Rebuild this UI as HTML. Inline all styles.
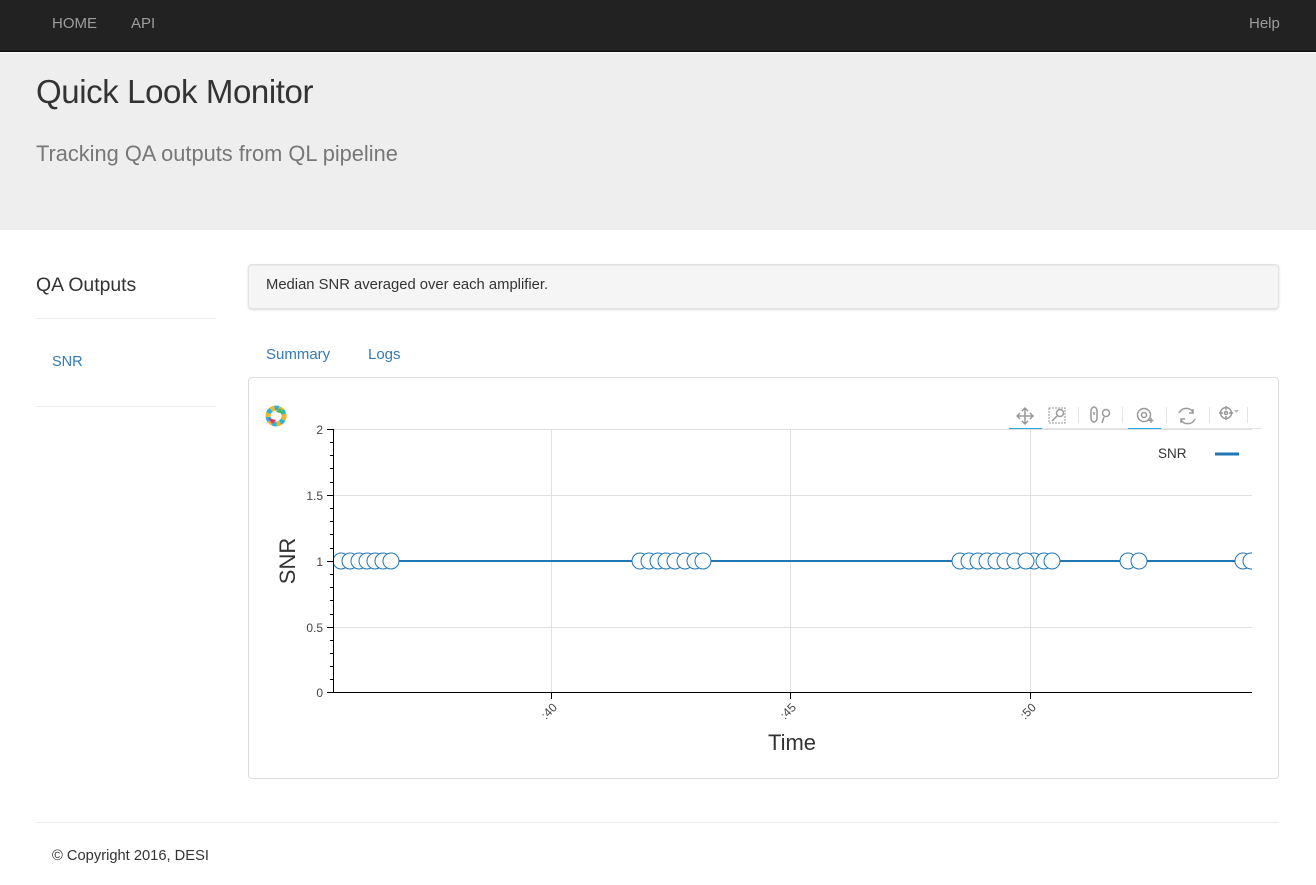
<!DOCTYPE html>
<html><head><meta charset="utf-8"><style>
*{margin:0;padding:0;box-sizing:border-box}
body{width:1316px;height:885px;position:relative;background:#fff;font-family:"Liberation Sans",sans-serif;overflow:hidden;color:#333}
.a{position:absolute;line-height:1;white-space:nowrap}
</style></head><body>
<div class="a" style="left:0;top:0;width:1316px;height:52px;background:#222;border-bottom:1px solid #080808"></div>
<div class="a" style="left:52px;top:16px;font-size:15px;color:#9d9d9d">HOME</div>
<div class="a" style="left:131px;top:16px;font-size:15px;color:#9d9d9d">API</div>
<div class="a" style="left:1249px;top:16px;font-size:15px;color:#9d9d9d">Help</div>
<div class="a" style="left:0;top:53px;width:1316px;height:177px;background:#eee"></div>
<div class="a" style="left:36px;top:75px;font-size:33px;letter-spacing:-0.4px;color:#333">Quick Look Monitor</div>
<div class="a" style="left:36px;top:143px;font-size:21.8px;color:#777">Tracking QA outputs from QL pipeline</div>
<div class="a" style="left:36px;top:276px;font-size:19.4px;color:#333">QA Outputs</div>
<div class="a" style="left:36px;top:318px;width:180px;height:1px;background:#eee"></div>
<div class="a" style="left:52px;top:355px;font-size:14.5px;color:#337ab7">SNR</div>
<div class="a" style="left:36px;top:406px;width:180px;height:1px;background:#eee"></div>
<div class="a" style="left:248px;top:264px;width:1031px;height:45px;background:#f5f5f5;border:1px solid #e3e3e3;border-radius:4px;box-shadow:inset 0 1px 1px rgba(0,0,0,.05),0 1px 2px rgba(0,0,0,.15)"></div>
<div class="a" style="left:266px;top:278px;font-size:14.8px;color:#333">Median SNR averaged over each amplifier.</div>
<div class="a" style="left:266px;top:347px;font-size:15px;color:#337ab7">Summary</div>
<div class="a" style="left:368px;top:347px;font-size:15px;color:#337ab7">Logs</div>
<div class="a" style="left:248px;top:377px;width:1031px;height:402px;border:1px solid #ddd;border-radius:4px"></div>
<svg class="a" style="left:0;top:0" width="1316" height="885" font-family="Liberation Sans, sans-serif">
<g transform="translate(276,416)">
<circle r="8" fill="none" stroke="#f6b51e" stroke-width="5" stroke-dasharray="4 4"/>
<circle r="8" fill="none" stroke="#1fb5e8" stroke-width="5" stroke-dasharray="4 4" stroke-dashoffset="4"/>
<circle r="5" fill="#fff"/>
<path d="M-8,2 L-4,8 L0,4Z" fill="#e8325c"/><path d="M8,-2 L4,-8 L0,-4Z" fill="#4cb848"/>
</g>
<line x1="1008" y1="428.5" x2="1262" y2="428.5" stroke="#e5e5e5" stroke-width="1"/>
<line x1="1009" y1="429" x2="1042" y2="429" stroke="#26aae1" stroke-width="2"/>
<line x1="1128" y1="429" x2="1161" y2="429" stroke="#26aae1" stroke-width="2"/>
<g stroke="#999" fill="none" stroke-width="1.5">
<path d="M1025,408v16M1017,416h16M1022,411l3-3 3,3M1022,421l3,3 3-3M1020,413l-3,3 3,3M1030,413l3,3-3,3"/>
<rect x="1049" y="408" width="16" height="15" stroke-dasharray="2 1" stroke-width="1"/>
<circle cx="1060" cy="413" r="3.5"/><path d="M1057,416l-5,5"/>
<path d="M1091,411a3,4 0 0 1 6,0v7a3,4 0 0 1-6,0z M1094,412v3"/>
<circle cx="1106" cy="413" r="3.5"/><path d="M1104,417l-2,6"/>
<circle cx="1144" cy="415" r="6.5"/><circle cx="1144" cy="415" r="2.5"/>
<path d="M1151,418v5M1148.5,420.5h5"/>
<path d="M1179,413a8,8 0 0 1 14,-1M1195,419a8,8 0 0 1-14,1"/>
<path d="M1193,409v4h-4M1181,423v-4h4"/>
<circle cx="1226" cy="413" r="5.5"/><circle cx="1226" cy="413" r="1.5"/>
<path d="M1226,406v4M1226,416v4M1219,413h4M1229,413h4"/>
</g>
<path d="M1234,410h5l-2.5,3z" fill="#bbb"/>
<g stroke="#e5e5e5" stroke-width="1"><path d="M1078.5,407v16M1122.5,407v16M1166.5,407v16M1209.5,407v16M1247.5,407v16"/></g>
<g stroke="#e0e0e0" stroke-width="1">
<path d="M333,495.5H1252M333,561.5H1252M333,627.5H1252M333,429.5H1252"/>
<path d="M551.5,429V692M790.5,429V692M1030.5,429V692"/>
</g>
<g stroke="#000" stroke-width="1">
<path d="M333.5,429V693M333,692.5H1252"/>
<path d="M327,429.5h6M327,495.5h6M327,561.5h6M327,627.5h6M327,692.5h6"/>
<path d="M330,442.5h3M330,455.5h3M330,468.5h3M330,482.5h3M330,508.5h3M330,521.5h3M330,534.5h3M330,548.5h3M330,574.5h3M330,587.5h3M330,600.5h3M330,614.5h3M330,640.5h3M330,653.5h3M330,666.5h3M330,679.5h3"/>
<path d="M551.5,692v7M790.5,692v7M1030.5,692v7"/>
</g>
<g font-size="12" fill="#444" text-anchor="end">
<text x="323" y="434">2</text><text x="323" y="500">1.5</text><text x="323" y="566">1</text><text x="323" y="632">0.5</text><text x="323" y="697">0</text>
</g>
<g font-size="12" fill="#444">
<text transform="translate(546,720) rotate(-45)">:40</text>
<text transform="translate(785,720) rotate(-45)">:45</text>
<text transform="translate(1025,720) rotate(-45)">:50</text>
</g>
<text x="792" y="750" font-size="22" fill="#333" text-anchor="middle">Time</text>
<text transform="translate(295,561) rotate(-90)" font-size="22" fill="#333" text-anchor="middle">SNR</text>
<text x="1158" y="458" font-size="13.5" fill="#333">SNR</text>
<line x1="1215" y1="454" x2="1239" y2="454" stroke="#1f77b4" stroke-width="3"/>
<defs><clipPath id="c"><rect x="334" y="429" width="918" height="263"/></clipPath></defs>
<g clip-path="url(#c)">
<line x1="333" y1="561" x2="1252" y2="561" stroke="#1f77b4" stroke-width="2"/>
<g fill="#fff" stroke="#1f77b4" stroke-width="1">
<circle cx="341" cy="561" r="8"/><circle cx="350" cy="561" r="8"/><circle cx="359" cy="561" r="8"/><circle cx="367" cy="561" r="8"/><circle cx="375" cy="561" r="8"/><circle cx="383" cy="561" r="8"/><circle cx="391" cy="561" r="8"/>
<circle cx="640" cy="561" r="8"/><circle cx="649" cy="561" r="8"/><circle cx="658" cy="561" r="8"/><circle cx="666" cy="561" r="8"/><circle cx="675" cy="561" r="8"/><circle cx="685" cy="561" r="8"/><circle cx="695" cy="561" r="8"/><circle cx="703" cy="561" r="8"/>
<circle cx="960" cy="561" r="8"/><circle cx="969" cy="561" r="8"/><circle cx="978" cy="561" r="8"/><circle cx="987" cy="561" r="8"/><circle cx="996" cy="561" r="8"/><circle cx="1005" cy="561" r="8"/><circle cx="1015" cy="561" r="8"/><circle cx="1034" cy="561" r="8"/><circle cx="1044" cy="561" r="8"/><circle cx="1052" cy="561" r="8"/><circle cx="1026" cy="561" r="8"/>
<circle cx="1128" cy="561" r="8"/><circle cx="1139" cy="561" r="8"/>
<circle cx="1243" cy="561" r="8"/><circle cx="1251" cy="561" r="8"/>
</g></g>
</svg>
<div class="a" style="left:36px;top:822px;width:1243px;height:1px;background:#eee"></div>
<div class="a" style="left:52px;top:849px;font-size:14.7px;color:#333">© Copyright 2016, DESI</div>
</body></html>
